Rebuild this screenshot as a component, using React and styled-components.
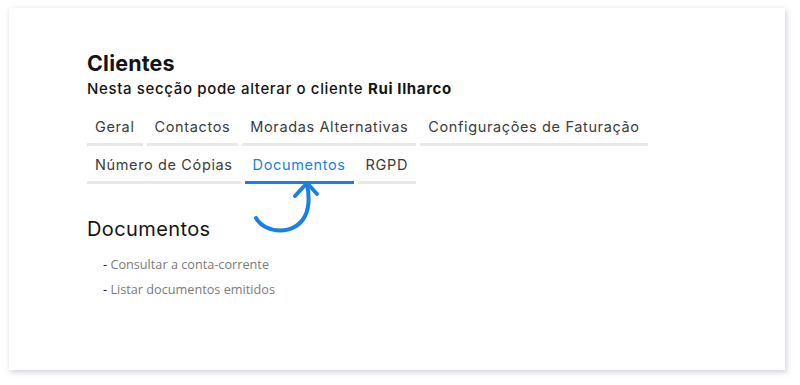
import styled, { createGlobalStyle } from "styled-components";

const GlobalStyle = createGlobalStyle`
  body {
    margin: 0;
    background: #fff;
    font-family: "Inter", "Open Sans", sans-serif;
  }
`;

const Page = styled.div`
  padding: 8px 15px 15px 9px;
`;

const Card = styled.section`
  position: relative;
  height: 362px;
  box-sizing: border-box;
  background: #fff;
  box-shadow: 2px 3px 5px rgba(190, 195, 215, 0.55), 0 0 4px rgba(220, 222, 230, 0.5);
  padding: 42px 78px 0;
`;

const Title = styled.h1`
  margin: 0;
  font-size: 21.5px;
  line-height: 26px;
  font-weight: 700;
  letter-spacing: 0.2px;
  color: #141414;
`;

const Subtitle = styled.p`
  margin: 3px 0 0;
  font-size: 15px;
  line-height: 20px;
  font-weight: 500;
  letter-spacing: 0.65px;
  color: #141414;
  b {
    font-weight: 700;
  }
`;

const Tabs = styled.nav`
  display: flex;
  flex-wrap: wrap;
  gap: 0 4px;
  margin-top: 9px;
  width: 600px;
`;

const Tab = styled.a`
  display: block;
  padding: 9px 8px 6px;
  font-size: 14.5px;
  line-height: 20px;
  letter-spacing: 0.63px;
  color: ${({ $active }) => ($active ? "#1a7fe6" : "#3b3b3b")};
  border-bottom: 3px solid ${({ $active }) => ($active ? "#1a7fe6" : "#e8e8e8")};
  cursor: pointer;
`;

const Pointer = styled.svg`
  position: absolute;
  left: 240px;
  top: 168px;
`;

const Section = styled.h2`
  margin: 32px 0 0;
  font-size: 20px;
  line-height: 26px;
  font-weight: 400;
  letter-spacing: 0.4px;
  color: #141414;
`;

const Links = styled.ul`
  list-style: none;
  margin: 14px 0 0 16px;
  padding: 0;
  display: flex;
  flex-direction: column;
  gap: 7.5px;
`;

const LinkItem = styled.li`
  font-family: "Open Sans", sans-serif;
  font-size: 12.7px;
  line-height: 17px;
  color: #222;
  a {
    color: #7a7a7a;
  }
`;

const tabs = [
  "Geral",
  "Contactos",
  "Moradas Alternativas",
  "Configurações de Faturação",
  "Número de Cópias",
  "Documentos",
  "RGPD",
];

export default function App() {
  return (
    <Page>
      <GlobalStyle />
      <Card>
        <Title>Clientes</Title>
        <Subtitle>
          Nesta secção pode alterar o cliente <b>Rui Ilharco</b>
        </Subtitle>
        <Tabs>
          {tabs.map((t) => (
            <Tab key={t} $active={t === "Documentos"}>
              {t}
            </Tab>
          ))}
        </Tabs>
        <Pointer width="75" height="70" viewBox="0 0 75 70">
          <path
            d="M7 42 C 16 58, 46 60, 56 40 C 61 30, 60 18, 58 8"
            fill="none"
            stroke="#1a7fe6"
            strokeWidth="4"
            strokeLinecap="round"
          />
          <path
            d="M46 20 L 58 7 L 68 18"
            fill="none"
            stroke="#1a7fe6"
            strokeWidth="4"
            strokeLinecap="round"
            strokeLinejoin="round"
          />
        </Pointer>
        <Section>Documentos</Section>
        <Links>
          <LinkItem>
            - <a>Consultar a conta-corrente</a>
          </LinkItem>
          <LinkItem>
            - <a>Listar documentos emitidos</a>
          </LinkItem>
        </Links>
      </Card>
    </Page>
  );
}
